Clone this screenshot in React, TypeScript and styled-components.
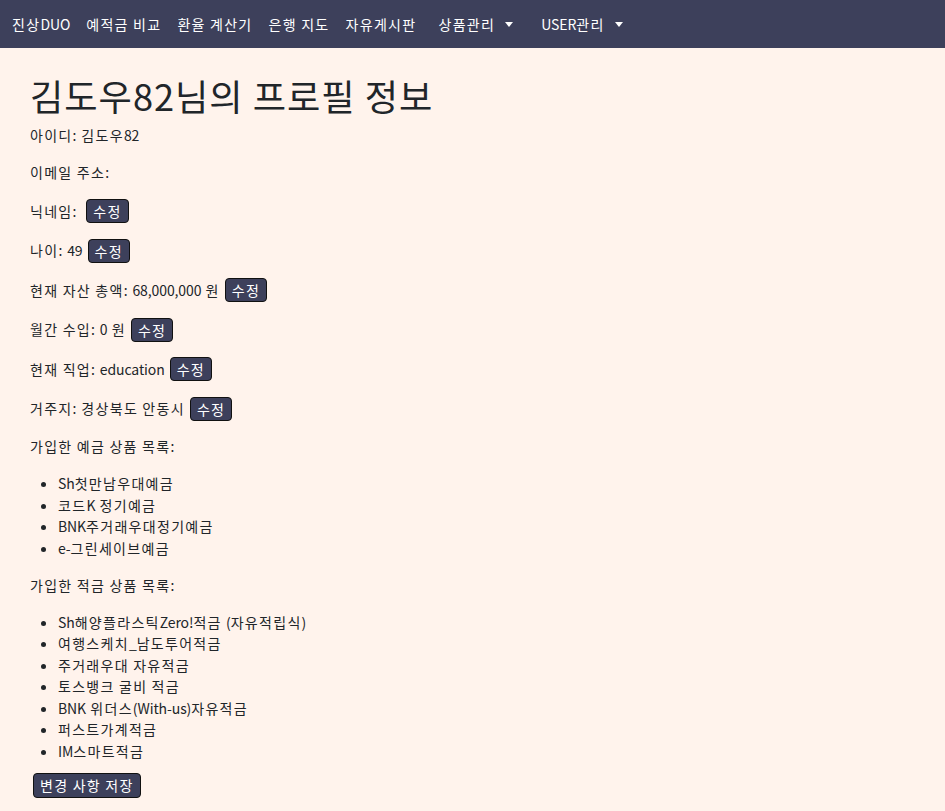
import styled, { createGlobalStyle } from "styled-components";

const GlobalStyle = createGlobalStyle`
  html, body {
    margin: 0;
    padding: 0;
    background-color: #fff3ec;
    font-family: "Noto Sans CJK KR", "Noto Sans", sans-serif;
    color: #212529;
  }
`;

// Hangul runs get wider tracking than Latin runs, to match the original face
const Run = styled.span<{ latin?: boolean }>`
  letter-spacing: ${({ latin }) => (latin ? "-0.1px" : "1.3px")};
`;

const Text = styled.span`
  white-space: pre;
  word-spacing: 1.2px;
`;

function Spaced({ text }: { text: string }) {
  return (
    <Text>
      {text
        .split(/([\x00-\x7F]+)/)
        .filter(Boolean)
        .map((part, i) => (
          <Run key={i} latin={/^[\x00-\x7F]+$/.test(part)}>
            {part}
          </Run>
        ))}
    </Text>
  );
}

const NavBar = styled.nav`
  height: 48px;
  background-color: #3d405b;
  display: flex;
  align-items: center;
  padding: 0 4px;
`;

const NavLink = styled.a<{ dropdown?: boolean }>`
  color: #ffffff;
  font-size: 14px;
  text-decoration: none;
  padding: 0 ${({ dropdown }) => (dropdown ? "14px" : "8px")};
  display: flex;
  align-items: center;
`;

const Caret = styled.span`
  width: 0;
  height: 0;
  margin-left: 10px;
  border-left: 4px solid transparent;
  border-right: 4px solid transparent;
  border-top: 5px solid #ffffff;
`;

const Main = styled.main`
  padding: 26px 30px 12px;
  font-size: 14px;
`;

const Title = styled.h1`
  font-size: 36.2px;
  font-weight: 400;
  letter-spacing: 1px;
  margin: 0 0 8px;
  line-height: 1.2;
`;

const Row = styled.div`
  margin: 0 0 16px;
  line-height: 21px;
  min-height: 21px;
  display: flex;
  align-items: center;
  gap: 5px;
`;

const EditButton = styled.button`
  background-color: #3d405b;
  color: #ffffff;
  border: 1px solid #111111;
  border-radius: 4px;
  font-family: inherit;
  font-size: 14px;
  height: 24px;
  margin: -0.25px 0;
  padding: 0 6px;
  line-height: 22px;
  cursor: pointer;
`;

const List = styled.ul`
  margin: 0 0 16px;
  padding-left: 28px;
  line-height: 21.4px;
`;

const SaveButton = styled(EditButton)`
  display: block;
  height: 25px;
  margin: -5px 0 0 3px;
`;

const deposits = ["Sh첫만남우대예금", "코드K 정기예금", "BNK주거래우대정기예금", "e-그린세이브예금"];

const savings = [
  "Sh해양플라스틱Zero!적금 (자유적립식)",
  "여행스케치_남도투어적금",
  "주거래우대 자유적금",
  "토스뱅크 굴비 적금",
  "BNK 위더스(With-us)자유적금",
  "퍼스트가계적금",
  "IM스마트적금",
];

const fields: { label: string; value: string; editable: boolean }[] = [
  { label: "아이디:", value: "김도우82", editable: false },
  { label: "이메일 주소:", value: "", editable: false },
  { label: "닉네임:", value: "", editable: true },
  { label: "나이:", value: "49", editable: true },
  { label: "현재 자산 총액:", value: "68,000,000 원", editable: true },
  { label: "월간 수입:", value: "0 원", editable: true },
  { label: "현재 직업:", value: "education", editable: true },
  { label: "거주지:", value: "경상북도 안동시", editable: true },
];

const navItems = ["진상DUO", "예적금 비교", "환율 계산기", "은행 지도", "자유게시판"];

export default function App() {
  return (
    <>
      <GlobalStyle />
      <NavBar>
        {navItems.map((item) => (
          <NavLink href="#" key={item}>
            <Spaced text={item} />
          </NavLink>
        ))}
        <NavLink href="#" dropdown>
          <Spaced text="상품관리" />
          <Caret />
        </NavLink>
        <NavLink href="#" dropdown>
          <Spaced text="USER관리" />
          <Caret />
        </NavLink>
      </NavBar>
      <Main>
        <Title>김도우82님의 프로필 정보</Title>
        {fields.map((f) => (
          <Row key={f.label}>
            <Spaced text={f.label} />
            {(f.value || f.editable) && <Spaced text={f.value} />}
            {f.editable && (
              <EditButton>
                <Spaced text="수정" />
              </EditButton>
            )}
          </Row>
        ))}
        <Row>
          <Spaced text="가입한 예금 상품 목록:" />
        </Row>
        <List>
          {deposits.map((d) => (
            <li key={d}>
              <Spaced text={d} />
            </li>
          ))}
        </List>
        <Row>
          <Spaced text="가입한 적금 상품 목록:" />
        </Row>
        <List>
          {savings.map((s) => (
            <li key={s}>
              <Spaced text={s} />
            </li>
          ))}
        </List>
        <SaveButton>
          <Spaced text="변경 사항 저장" />
        </SaveButton>
      </Main>
    </>
  );
}
